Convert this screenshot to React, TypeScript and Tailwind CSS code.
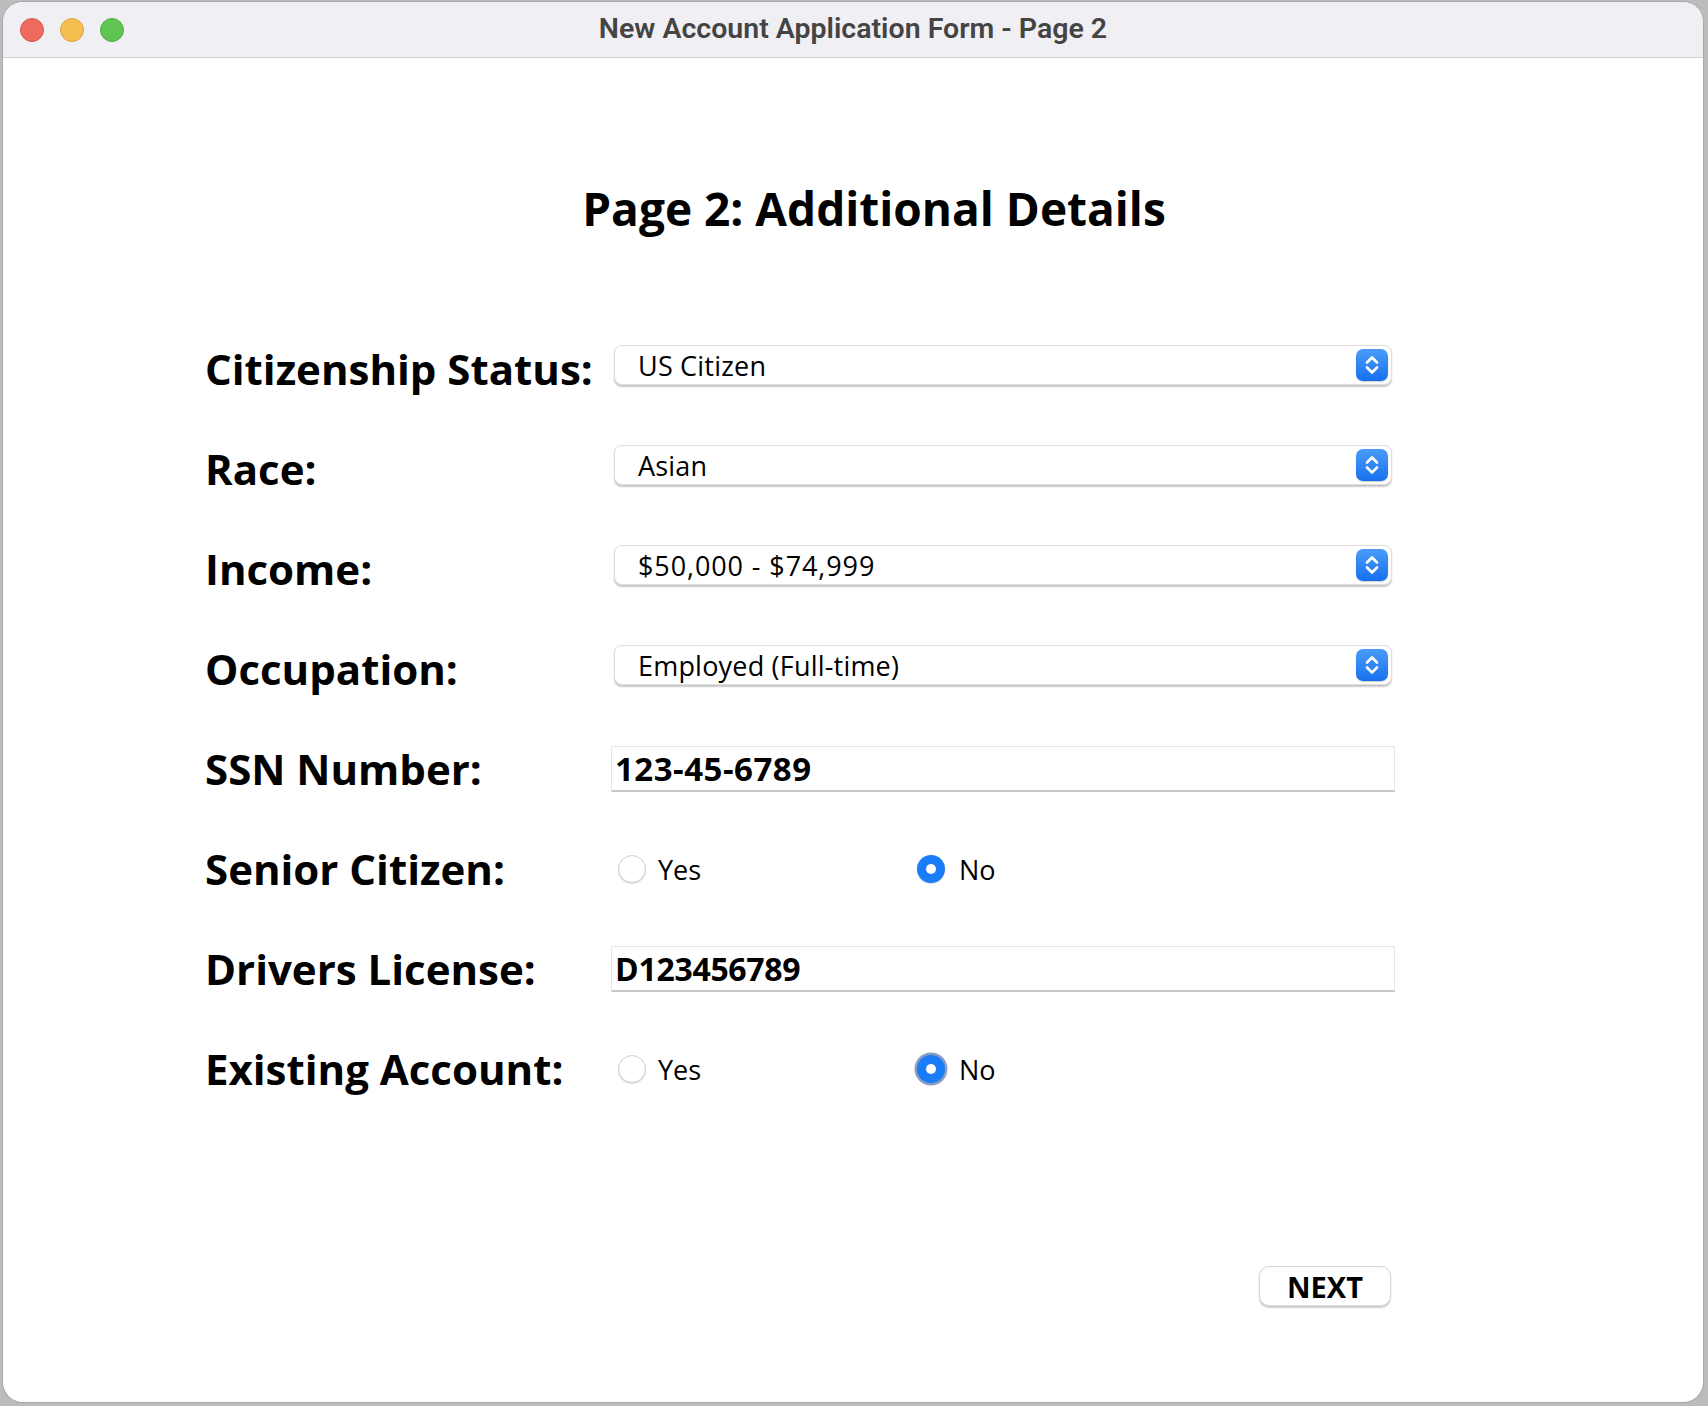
import React from "react";

const font = { fontFamily: '"Open Sans", "Noto Sans", sans-serif' };

function Stepper() {
  return (
    <div className="w-[32px] h-[32px] rounded-[7px] bg-gradient-to-b from-[#4a9cf9] to-[#1570ee] flex items-center justify-center shadow-[0_1px_1px_rgba(0,0,0,0.2)]">
      <svg width="32" height="32" viewBox="0 0 32 32" fill="none">
        <path d="M11 13.5 L16 8.5 L21 13.5" stroke="white" strokeWidth="2.6" strokeLinecap="round" strokeLinejoin="round" />
        <path d="M11 18.5 L16 23.5 L21 18.5" stroke="white" strokeWidth="2.6" strokeLinecap="round" strokeLinejoin="round" />
      </svg>
    </div>
  );
}

function Select({ value, textClass }: { value: string; textClass?: string }) {
  return (
    <div className="mb-[8px] w-[778px] h-[40px] bg-white rounded-[8px] border border-[#dedede] shadow-[0_1.5px_1.5px_rgba(0,0,0,0.22)] flex items-center justify-between pl-[23px] pr-[3px]">
      <span className={"text-[27px] leading-none text-black " + (textClass ?? "tracking-[0.2px]")}>{value}</span>
      <Stepper />
    </div>
  );
}

function TextField({ value, textClass }: { value: string; textClass: string }) {
  return (
    <div className="-ml-[3px] w-[784px] h-[46px] bg-white border border-[#e6e6e6] border-b-[2px] border-b-[#c9c9c9] flex items-center pl-[3px]">
      <span className={"leading-none font-bold text-black " + textClass}>{value}</span>
    </div>
  );
}

function Radio({ checked, focus }: { checked: boolean; focus?: boolean }) {
  if (checked) {
    return (
      <div
        className={
          "w-[28px] h-[28px] rounded-full bg-[#1a7cf6] flex items-center justify-center " +
          (focus ? "shadow-[0_0_0_2.5px_rgba(60,95,150,0.6)]" : "shadow-[0_1px_1px_rgba(0,0,0,0.15)]")
        }
      >
        <div className="w-[10px] h-[10px] rounded-full bg-white" />
      </div>
    );
  }
  return <div className="w-[28px] h-[28px] rounded-full bg-white border border-[#cfcfcf] shadow-[0_1px_1px_rgba(0,0,0,0.12)]" />;
}

function RadioGroup({ focus }: { focus?: boolean }) {
  return (
    <div className="flex items-center">
      <div className="flex items-center gap-[12px] w-[303px] pl-[4px]">
        <Radio checked={false} />
        <span className="text-[27px] leading-none text-black">Yes</span>
      </div>
      <div className="flex items-center gap-[14px]">
        <Radio checked={true} focus={focus} />
        <span className="text-[27px] leading-none text-black">No</span>
      </div>
    </div>
  );
}

function Row({ label, children }: { label: string; children: React.ReactNode }) {
  return (
    <div className="h-[100px] flex items-center">
      <div className="w-[409px] text-[42px] leading-none font-bold text-black">{label}</div>
      <div className="flex items-center">{children}</div>
    </div>
  );
}

export default function App() {
  return (
    <div className="w-[1708px] h-[1406px] bg-[#bcbcbc] overflow-hidden pt-[2px] pl-[3px]" style={font}>
      <div className="w-[1700px] h-[1400px] rounded-[20px] bg-white overflow-hidden shadow-[0_0_0_1px_#a8a8a8] flex flex-col">
        <div className="h-[56px] bg-[#f0eff4] border-b border-[#d2d1d6] relative flex items-center shrink-0">
          <div className="flex items-center gap-[16px] pl-[17px]">
            <div className="w-[24px] h-[24px] rounded-full bg-[#ee6a5f] border border-[#d8574d]" />
            <div className="w-[24px] h-[24px] rounded-full bg-[#f5bf4f] border border-[#d9a33c]" />
            <div className="w-[24px] h-[24px] rounded-full bg-[#61c554] border border-[#4fad45]" />
          </div>
          <div className="absolute inset-0 flex items-center justify-center pointer-events-none">
            <span
              className="text-[28.5px] font-semibold text-[#444444] leading-none"
              style={{ fontFamily: 'Roboto, "Liberation Sans", sans-serif' }}
            >
              New Account Application Form - Page 2
            </span>
          </div>
        </div>

        <div className="flex flex-col">
          <div className="mt-[127px] pl-[42px] text-center text-[46px] leading-none font-bold text-black">
            Page 2: Additional Details
          </div>

          <div className="mt-[88px] ml-[202px] w-[1193px] flex flex-col">
            <Row label="Citizenship Status:">
              <Select value="US Citizen" />
            </Row>
            <Row label="Race:">
              <Select value="Asian" />
            </Row>
            <Row label="Income:">
              <Select value="$50,000 - $74,999" textClass="tracking-[0.9px]" />
            </Row>
            <Row label="Occupation:">
              <Select value="Employed (Full-time)" />
            </Row>
            <Row label="SSN Number:">
              <TextField value="123-45-6789" textClass="text-[33px] tracking-[0.5px]" />
            </Row>
            <Row label="Senior Citizen:">
              <RadioGroup />
            </Row>
            <Row label="Drivers License:">
              <TextField value="D123456789" textClass="text-[32px] tracking-[-0.3px]" />
            </Row>
            <Row label="Existing Account:">
              <RadioGroup focus />
            </Row>

            <div className="mt-[147px] flex justify-end pr-[7px]">
              <button className="w-[132px] h-[40px] rounded-[10px] bg-white border border-[#d8d8d8] shadow-[0_1.5px_1.5px_rgba(0,0,0,0.2)] flex items-center justify-center text-[29px] font-bold leading-none text-black">
                NEXT
              </button>
            </div>
          </div>
        </div>
      </div>
    </div>
  );
}
